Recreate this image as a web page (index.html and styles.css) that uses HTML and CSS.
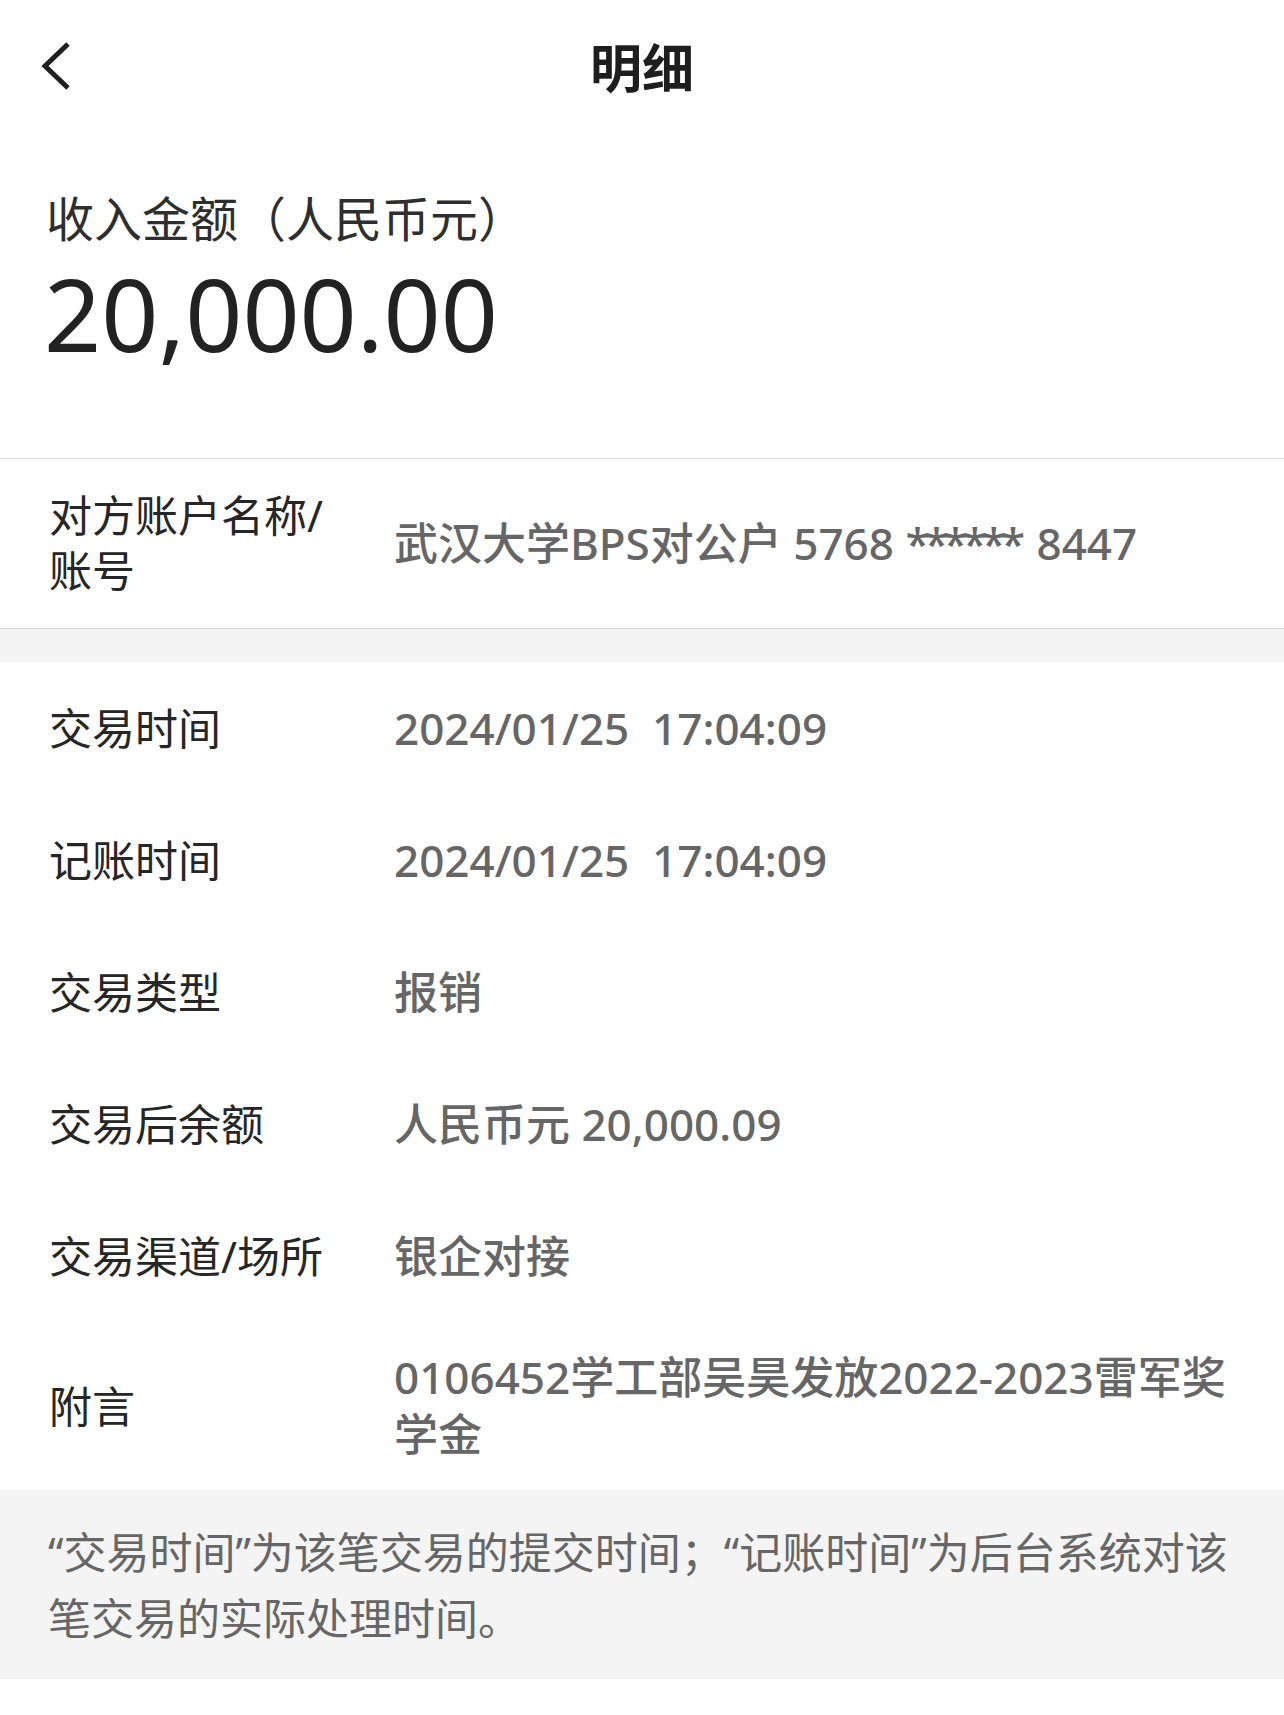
FILE: index.html
```html
<!DOCTYPE html>
<html lang="zh-CN">
<head>
<meta charset="utf-8">
<title>明细</title>
<link rel="stylesheet" href="styles.css">
</head>
<body>
<div class="page">
  <header class="nav">
    <div class="nav-side">
      <svg class="back" width="32" height="50" viewBox="0 0 32 50" aria-hidden="true">
        <polyline points="28,3 5,25 28,47" fill="none" stroke="#1f1f1f" stroke-width="5" stroke-linejoin="miter"/>
      </svg>
    </div>
    <h1 class="nav-title">明细</h1>
    <div class="nav-side"></div>
  </header>

  <section class="amount">
    <div class="amount-label">收入金额（人民币元）</div>
    <div class="amount-value">20,000.00</div>
  </section>

  <section class="account">
    <div class="row row-two row-account">
      <div class="label">对方账户名称/账号</div>
      <div class="value">武汉大学BPS对公户 5768 <span class="mask">******</span> 8447</div>
    </div>
  </section>

  <div class="spacer"></div>

  <section class="list">
    <div class="row">
      <div class="label">交易时间</div>
      <div class="value">2024/01/25&nbsp;&nbsp;17:04:09</div>
    </div>
    <div class="row">
      <div class="label">记账时间</div>
      <div class="value">2024/01/25&nbsp;&nbsp;17:04:09</div>
    </div>
    <div class="row">
      <div class="label">交易类型</div>
      <div class="value">报销</div>
    </div>
    <div class="row">
      <div class="label">交易后余额</div>
      <div class="value">人民币元 20,000.09</div>
    </div>
    <div class="row">
      <div class="label">交易渠道/场所</div>
      <div class="value">银企对接</div>
    </div>
    <div class="row row-two">
      <div class="label">附言</div>
      <div class="value">0106452学工部吴昊发放2022-2023雷军奖学金</div>
    </div>
  </section>

  <footer class="note">“交易时间”为该笔交易的提交时间；“记账时间”为后台系统对该笔交易的实际处理时间。</footer>
  <div class="bottom"></div>
</div>
</body>
</html>
```

FILE: styles.css
```css
* { box-sizing: border-box; }

html, body {
  margin: 0;
  padding: 0;
  background: #ffffff;
}

body {
  font-family: "Noto Sans", "Noto Sans CJK SC", sans-serif;
  color: #262626;
}

.page {
  width: 1284px;
  display: flex;
  flex-direction: column;
}

.nav {
  height: 132px;
  display: grid;
  grid-template-columns: 1fr auto 1fr;
  align-items: center;
}

.nav-side {
  display: flex;
  align-items: center;
  padding-left: 40px;
}

.back { display: block; }

.nav-title {
  margin: 0;
  font-size: 52px;
  font-weight: 700;
  line-height: 60px;
  color: #1e1e1e;
  font-family: "Noto Sans CJK SC", sans-serif;
}

.amount {
  padding: 58px 50px 78px 46px;
  border-bottom: 1px solid #dcdcdc;
}

.amount-label {
  font-family: "Noto Sans CJK SC", sans-serif;
  font-size: 48px;
  line-height: 52px;
  color: #2e2e2e;
}

.amount-value {
  margin-top: 4px;
  margin-left: -2px;
  font-size: 100px;
  line-height: 134px;
  color: #222222;
  font-weight: 400;
}

.account {
  border-bottom: 1px solid #d8d8d8;
}

.spacer {
  height: 33px;
  background: #f4f4f4;
}

.row {
  display: flex;
  align-items: center;
  min-height: 132px;
  padding: 27px 40px 27px 49px;
}

.row-two {
  min-height: 0;
}

.row-account {
  padding-top: 29px;
  padding-bottom: 30px;
}

.label {
  flex: 0 0 296px;
  margin-right: 49px;
  font-size: 43px;
  line-height: 55px;
  color: #262626;
}

.value {
  flex: 1;
  font-size: 44px;
  line-height: 57px;
  color: #666666;
  font-weight: 500;
}

.mask {
  letter-spacing: -5px;
  margin-right: 5px;
}

.note {
  background: #f4f4f4;
  padding: 30px 40px 27px 48px;
  font-size: 43px;
  line-height: 66px;
  color: #666666;
}

.bottom {
  height: 36px;
}
```
